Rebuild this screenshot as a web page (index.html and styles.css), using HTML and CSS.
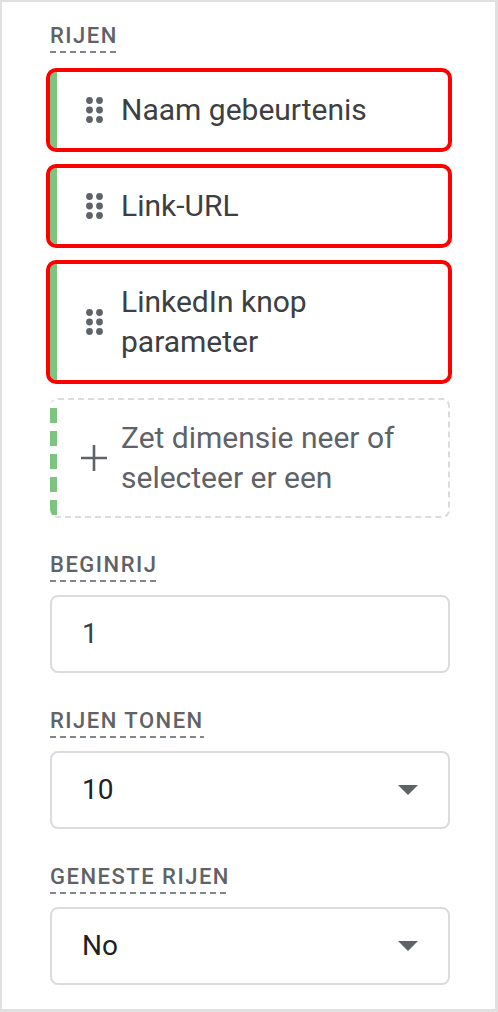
FILE: index.html
```html
<!DOCTYPE html>
<html lang="nl">
<head>
<meta charset="utf-8">
<title>Rijen</title>
<link rel="stylesheet" href="styles.css">
</head>
<body>
<div class="panel">
  <section class="section section-rows">
    <div class="label"><span>Rijen</span></div>
    <div class="cards">
      <div class="card">
        <svg class="handle" width="18" height="26" viewBox="0 0 18 26"><g fill="#5f6368"><circle cx="3.5" cy="3.5" r="3.4"/><circle cx="13.5" cy="3.5" r="3.4"/><circle cx="3.5" cy="13" r="3.4"/><circle cx="13.5" cy="13" r="3.4"/><circle cx="3.5" cy="22.5" r="3.4"/><circle cx="13.5" cy="22.5" r="3.4"/></g></svg>
        <span class="card-text">Naam gebeurtenis</span>
      </div>
      <div class="card">
        <svg class="handle" width="18" height="26" viewBox="0 0 18 26"><g fill="#5f6368"><circle cx="3.5" cy="3.5" r="3.4"/><circle cx="13.5" cy="3.5" r="3.4"/><circle cx="3.5" cy="13" r="3.4"/><circle cx="13.5" cy="13" r="3.4"/><circle cx="3.5" cy="22.5" r="3.4"/><circle cx="13.5" cy="22.5" r="3.4"/></g></svg>
        <span class="card-text">Link-URL</span>
      </div>
      <div class="card">
        <svg class="handle" width="18" height="26" viewBox="0 0 18 26"><g fill="#5f6368"><circle cx="3.5" cy="3.5" r="3.4"/><circle cx="13.5" cy="3.5" r="3.4"/><circle cx="3.5" cy="13" r="3.4"/><circle cx="13.5" cy="13" r="3.4"/><circle cx="3.5" cy="22.5" r="3.4"/><circle cx="13.5" cy="22.5" r="3.4"/></g></svg>
        <span class="card-text">LinkedIn knop parameter</span>
      </div>
      <div class="dropzone">
        <svg class="plus" width="28" height="28" viewBox="0 0 28 28"><path d="M14 1v26M1 14h26" stroke="#5f6368" stroke-width="2.6" fill="none"/></svg>
        <span class="drop-text">Zet dimensie neer of selecteer er een</span>
      </div>
    </div>
  </section>

  <section class="section">
    <div class="label"><span>Beginrij</span></div>
    <div class="field"><span class="value light">1</span></div>
  </section>

  <section class="section">
    <div class="label"><span>Rijen tonen</span></div>
    <div class="field"><span class="value">10</span><svg class="arrow" width="20" height="10" viewBox="0 0 20 10"><path d="M0 0h20L10 10z" fill="#5f6368"/></svg></div>
  </section>

  <section class="section">
    <div class="label"><span>Geneste rijen</span></div>
    <div class="field"><span class="value">No</span><svg class="arrow" width="20" height="10" viewBox="0 0 20 10"><path d="M0 0h20L10 10z" fill="#5f6368"/></svg></div>
  </section>
</div>
</body>
</html>
```
FILE: styles.css
```css
html, body {
  margin: 0;
  padding: 0;
  background: #fff;
}

body {
  font-family: Roboto, "Liberation Sans", Arial, sans-serif;
}

.panel {
  box-sizing: border-box;
  width: 498px;
  height: 1012px;
  border-style: solid;
  border-color: #e0e0e0;
  border-width: 2px 3px 3px 2px;
  padding: 21px 0 0 48px;
  background: #fff;
}

.section {
  width: 400px;
  display: flex;
  flex-direction: column;
  align-items: stretch;
  gap: 13px;
  margin-bottom: 35px;
}

.section-rows {
  gap: 19px;
  margin-bottom: 34px;
}

.label {
  display: flex;
}

.label span {
  display: inline-block;
  font-size: 22px;
  font-weight: 500;
  line-height: 26px;
  letter-spacing: 1.5px;
  text-transform: uppercase;
  color: #5f6368;
  padding-bottom: 4px;
  background: repeating-linear-gradient(to right, #80868b 0 6px, transparent 6px 10px) left bottom / 100% 2px no-repeat;
}

.cards {
  display: flex;
  flex-direction: column;
  gap: 20px;
}

.card {
  box-sizing: border-box;
  display: flex;
  align-items: center;
  width: 398px;
  min-height: 76px;
  padding: 18px 24px 18px 29px;
  border-left: 7px solid #7cc47f;
  border-radius: 6px;
  outline: 4px solid #ff0000;
  outline-offset: 0;
  background: #fff;
}

.handle {
  flex: none;
  margin-right: 17px;
}

.card-text {
  font-size: 30px;
  line-height: 40px;
  color: #3c4043;
}

.dropzone {
  box-sizing: border-box;
  display: flex;
  align-items: center;
  height: 120px;
  margin-top: -2px;
  padding: 0 24px 0 30px;
  border: 2px dashed #dadce0;
  border-left: 0;
  border-radius: 8px;
  background: repeating-linear-gradient(to bottom, transparent 0 8px, #7cc47f 8px 23px) left top / 7px 100% no-repeat;
}

.plus {
  flex: none;
  margin-right: 13px;
}

.drop-text {
  font-size: 30px;
  line-height: 40px;
  color: #5f6368;
}

.field {
  box-sizing: border-box;
  display: flex;
  align-items: center;
  justify-content: space-between;
  height: 78px;
  padding: 0 30px 0 30px;
  border: 2px solid #dadce0;
  border-radius: 8px;
  background: #fff;
}

.value {
  font-size: 28px;
  line-height: 40px;
  color: #202124;
}

.value.light {
  color: #3c4043;
}

.arrow {
  flex: none;
}
```
